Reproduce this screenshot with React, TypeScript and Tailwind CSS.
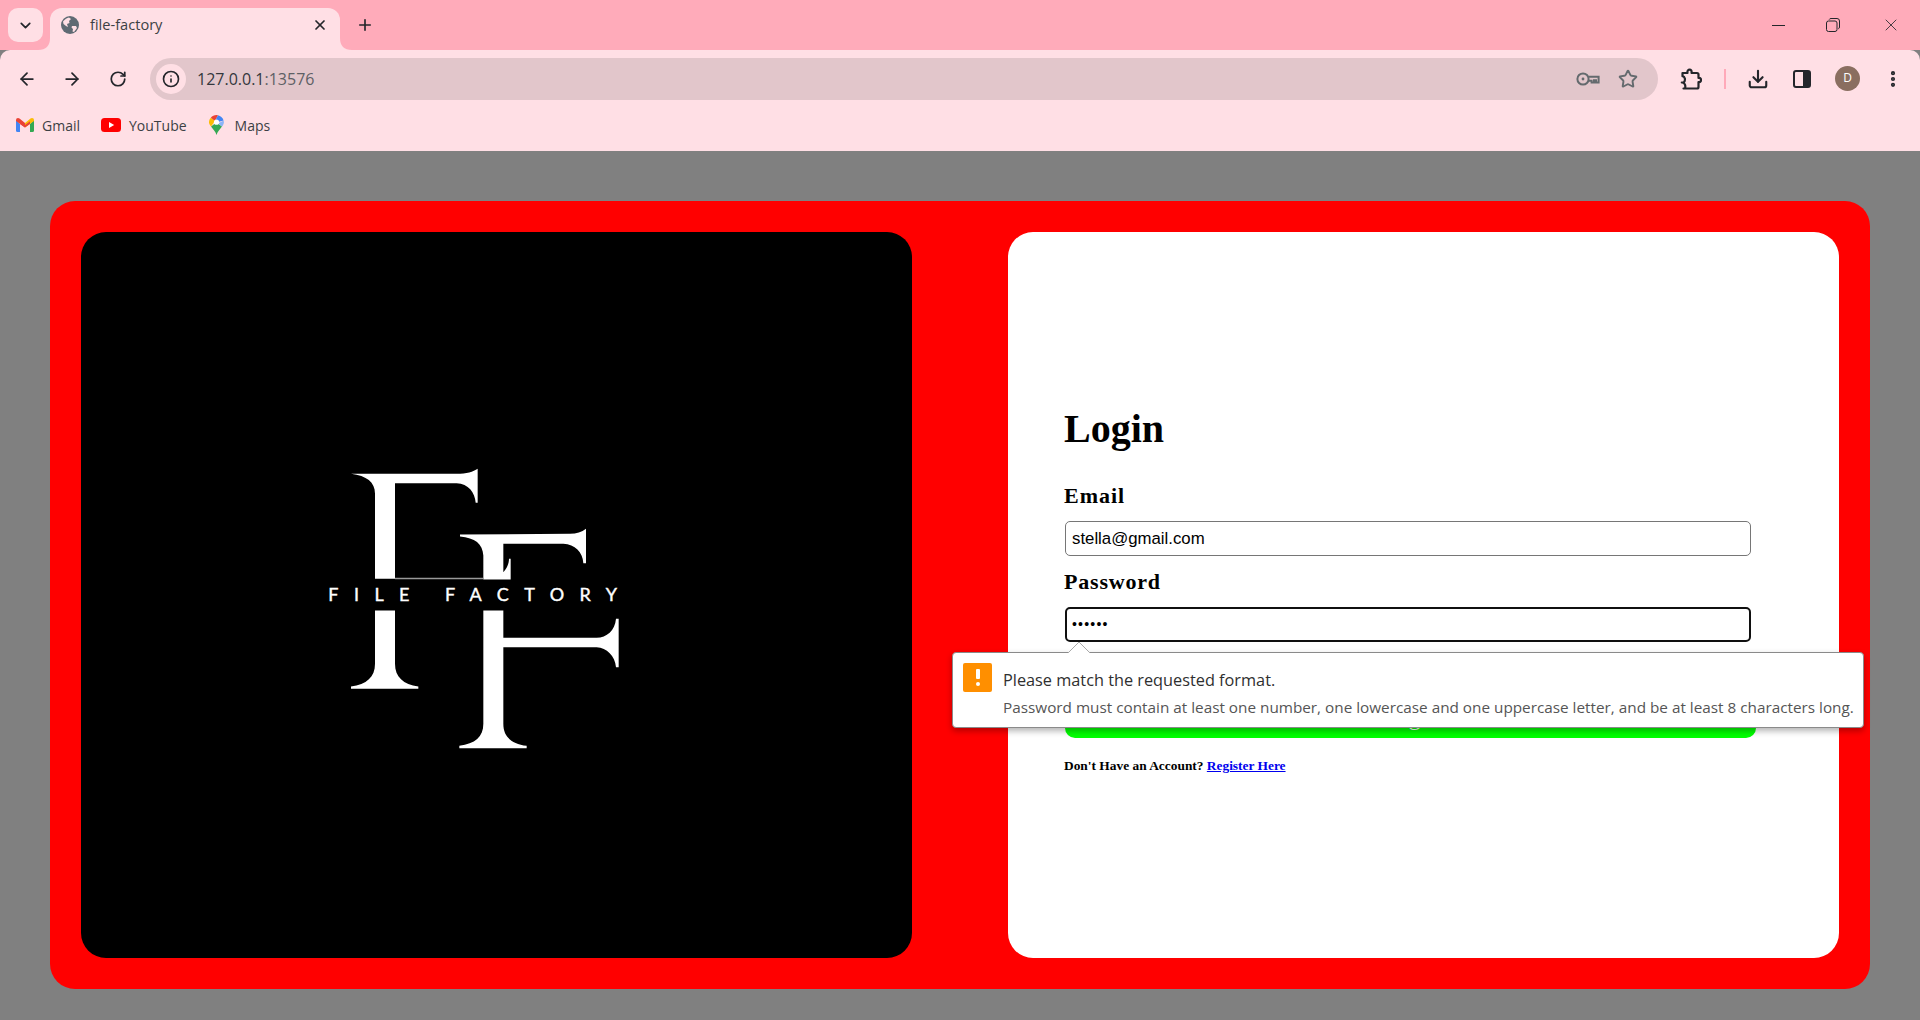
import React from "react";
import { ArrowLeft, ArrowRight, RotateCw, Info, Star, Download, X, Plus, ChevronDown, EllipsisVertical } from "lucide-react";

function Globe() {
  return (
    <svg width="18" height="18" viewBox="0 0 18 18">
      <circle cx="9" cy="9" r="9" fill="#5f6a73" />
      <path d="M2 5.5 C4 3 6 2 8 1.5 L10 3 L8 5 L8.5 7 L6 8 L7 11 L5 10 L2.5 8 Z" fill="#ffdfe5" />
      <path d="M11 10 L15 10 L16 12 L13 16 L11.5 15.5 L12 13 L10.5 11.5 Z" fill="#ffdfe5" />
    </svg>
  );
}

function Gmail() {
  return (
    <svg width="18" height="14" viewBox="0 0 18 14">
      <path d="M0 2 L0 12.5 Q0 14 1.5 14 L4 14 L4 6 Z" fill="#4285f4" />
      <path d="M14 6 L14 14 L16.5 14 Q18 14 18 12.5 L18 2 Z" fill="#34a853" />
      <path d="M0 2 Q0 0 2 0 Q2.8 0 3.5 .6 L9 5 L9 9.5 L0 3 Z" fill="#ea4335" />
      <path d="M18 2 Q18 0 16 0 Q15.2 0 14.5 .6 L9 5 L9 9.5 L18 3 Z" fill="#fbbc04" />
      <path d="M4 3.2 L9 7 L14 3.2 L14 6 L9 9.5 L4 6 Z" fill="#ea4335" />
    </svg>
  );
}

function YouTube() {
  return (
    <svg width="20" height="14" viewBox="0 0 20 14">
      <rect width="20" height="14" rx="3.5" fill="#ff0000" />
      <path d="M8 4 L13.2 7 L8 10 Z" fill="#fff" />
    </svg>
  );
}

function Maps() {
  return (
    <svg width="15" height="20" viewBox="0 0 15 20">
      <path d="M7.5 20 C6.5 16.5 4 14.5 2 11.5 L7.5 7.5 L13 11.5 C11 14.5 8.5 16.5 7.5 20 Z" fill="#34a853" />
      <path d="M2 11.5 C.6 9.8 0 8.8 0 7.3 C0 5.6 .6 4 1.8 2.8 L6 6 Z" fill="#fbbc04" />
      <path d="M1.8 2.8 C3.2 1 5.2 0 7.5 0 L9 .2 L6 6 Z" fill="#ea4335" />
      <path d="M9 .2 C11.6 .8 13.6 2.8 14.6 5.4 L9 7 L6 6 Z" fill="#4285f4" />
      <path d="M14.6 5.4 C15.2 7.8 14.8 9.4 13 11.5 L9 8.5 Z" fill="#8ab4f8" />
      <circle cx="7.5" cy="7.2" r="2.6" fill="#fff" />
    </svg>
  );
}

function KeyIcon() {
  return (
    <svg width="24" height="14" viewBox="0 0 24 14" fill="none" stroke="#646a6e" strokeWidth="2">
      <circle cx="7" cy="7" r="5.6" />
      <circle cx="7" cy="7" r="1.4" fill="#646a6e" stroke="none" />
      <path d="M12.6 4.8 L22.6 4.8 L22.6 10.5 L20 10.5 L20 8.2 L18 8.2 L18 10.5 L15.6 10.5 L15.6 8.8 L12.6 8.8" />
    </svg>
  );
}

function PuzzleIcon() {
  return (
    <svg width="22" height="22" viewBox="0 0 22 22" fill="none" stroke="#24262b" strokeWidth="2.2" strokeLinejoin="round">
      <path d="M2.5 5 L7.5 5 C7 2.5 8.5 1.6 9.6 1.6 C10.8 1.6 12 2.6 11.5 5 L17 5 Q18.5 5 18.5 6.5 L18.5 10 C20.5 9.5 21 11 21 12 C21 13 20.5 14.5 18.5 14 L18.5 19 Q18.5 20.5 17 20.5 L3.5 20.5 L5 20.5 C6 17 4.5 14.5 1.8 14.5 L3.8 14.5 C5.8 12 5 8.5 2.5 8.2 Z" />
    </svg>
  );
}

function SidePanelIcon() {
  return (
    <svg width="18" height="18" viewBox="0 0 18 18">
      <rect x="1" y="1" width="16" height="16" rx="2" fill="none" stroke="#24262b" strokeWidth="2" />
      <path d="M10 1 L15 1 Q17 1 17 3 L17 15 Q17 17 15 17 L10 17 Z" fill="#24262b" />
    </svg>
  );
}

function RestoreIcon() {
  return (
    <svg width="14" height="14" viewBox="0 0 14 14" fill="none" stroke="#24262b" strokeWidth="1">
      <rect x=".5" y="3" width="10.5" height="10.5" rx="2" />
      <path d="M3.2 1.6 Q3.6 .5 5 .5 L11 .5 Q13.5 .5 13.5 3 L13.5 9 Q13.5 10.4 12.3 10.8" />
    </svg>
  );
}

function Logo() {
  return (
    <svg width="500" height="500" viewBox="-189 -316.5 1500 1500" className="shrink-0">
      <g fill="#fff">
        <path d="M123 70 C170 76 195 95 195 130 L195 385 L255 385 L255 98 L440 98 C475 100 495 125 497 157 L503 157 L503 55 C490 64 470 70 440 70 Z" />
        <path d="M195 480 L255 480 L255 640 C255 680 280 702 325 708 L325 715 L123 715 L123 708 C170 702 195 680 195 640 Z" />
        <path d="M450 252 L780 250 C800 250 815 245 828 235 L828 338 L820 338 C818 305 795 282 760 280 L580 280 L580 365 C590 355 597 340 597 325 L602 325 L602 387 L520 387 L520 315 C518 280 495 262 450 258 Z" />
        <path d="M255 382 L520 382 L520 386 L255 386 Z" fill="#999" />
        <path d="M520 480 L580 480 L580 562 L860 562 C890 562 915 540 918 505 L926 505 L926 650 L918 650 C915 615 890 592 860 590 L580 590 L580 820 C580 860 605 880 650 886 L650 893 L448 893 L448 886 C495 880 520 860 520 820 Z" />
        <text x="55" y="451" fontSize="54" fontFamily="Lato, sans-serif" stroke="#fff" strokeWidth="1.2" textLength="866" lengthAdjust="spacing">FILE FACTORY</text>
      </g>
    </svg>
  );
}

export default function App() {
  return (
    <div className="relative flex h-screen w-full flex-col overflow-hidden bg-[#808080] font-['Open_Sans',sans-serif]">
      <div className="flex h-[50px] shrink-0 items-end bg-[#ffabba] pl-2">
        <div className="mb-2 flex h-[34px] w-[35px] items-center justify-center rounded-[10px] bg-[#ffdfe5]">
          <ChevronDown size={17} strokeWidth={2.4} color="#24262b" />
        </div>
        <div className="relative ml-[7px] flex h-[42px] w-[290px] items-center rounded-t-[12px] bg-[#ffdfe5] pb-[8px] pl-[11px] pr-[12px]">
          <svg className="absolute bottom-0 left-[-12px]" width="12" height="12" viewBox="0 0 12 12"><path d="M12 0 L12 12 L0 12 Q12 12 12 0 Z" fill="#ffdfe5" /></svg>
          <svg className="absolute bottom-0 right-[-12px]" width="12" height="12" viewBox="0 0 12 12"><path d="M0 0 L0 12 L12 12 Q0 12 0 0 Z" fill="#ffdfe5" /></svg>
          <Globe />
          <span className="ml-[11px] flex-1 text-[14.6px] text-[#3c3f44]">file-factory</span>
          <X size={16} strokeWidth={2.6} color="#24262b" />
        </div>
        <div className="mb-[12px] ml-[16px] flex h-[26px] items-center">
          <Plus size={18} strokeWidth={2.2} color="#24262b" />
        </div>
        <div className="mb-[15px] ml-auto flex items-center pr-[19px]">
          <div className="h-[1px] w-[13px] bg-[#24262b]" />
          <div className="ml-[41px]"><RestoreIcon /></div>
          <div className="ml-[41px]"><X size={20} strokeWidth={1} color="#24262b" /></div>
        </div>
      </div>

      <div className="flex h-[101px] shrink-0 flex-col rounded-t-[10px] bg-[#ffdfe5]">
        <div className="flex h-[58px] items-center pl-[17px]">
          <ArrowLeft size={20} strokeWidth={2.1} color="#24262b" />
          <ArrowRight size={20} strokeWidth={2.1} color="#24262b" className="ml-[25px]" />
          <RotateCw size={18} strokeWidth={2.3} color="#24262b" className="ml-[27px]" />
          <div className="ml-[23px] flex h-[42px] w-[1508px] items-center rounded-[21px] bg-[#e2c6cb] pl-[6px] pr-[20px]">
            <div className="flex h-[30px] w-[30px] items-center justify-center rounded-full bg-[#ffdfe5]">
              <Info size={18} strokeWidth={2.2} color="#24262b" />
            </div>
            <span className="ml-[11px] flex-1 text-[16px] text-[#33373d]">
              127.0.0.1<span className="text-[#5e6065]">:13576</span>
            </span>
            <KeyIcon />
            <Star size={20} strokeWidth={2.3} color="#646a6e" className="ml-[18px]" />
          </div>
          <div className="ml-[22px]"><PuzzleIcon /></div>
          <div className="ml-[22px] h-[20px] w-[2px] bg-[#ffa9b9]" />
          <Download size={22} strokeWidth={2.3} color="#24262b" className="ml-[21px]" />
          <div className="ml-[24px]"><SidePanelIcon /></div>
          <div className="mb-[2px] ml-[24px] flex h-[25px] w-[25px] items-center justify-center rounded-full bg-[#8a6e60] text-[12px] text-white">D</div>
          <EllipsisVertical size={20} strokeWidth={3} color="#24262b" className="ml-[23px]" />
        </div>
        <div className="flex h-[34px] items-center pl-[16px] text-[14px] text-[#3c3f44]">
          <Gmail />
          <span className="ml-[8px]">Gmail</span>
          <div className="ml-[21px]"><YouTube /></div>
          <span className="ml-[8px]">YouTube</span>
          <div className="ml-[22px]"><Maps /></div>
          <span className="ml-[11px]">Maps</span>
        </div>
      </div>

      <div className="flex-1 px-[50px] pb-[31px] pt-[50px]">
        <div className="grid h-full grid-cols-2 gap-[96px] rounded-[25px] bg-[#ff0000] p-[31px]">
          <div className="flex items-center justify-center overflow-hidden rounded-[25px] bg-black">
            <Logo />
          </div>
          <div className="flex flex-col justify-center rounded-[25px] bg-white pb-[9px] pl-[56px] font-['Liberation_Serif',serif] text-black">
            <h1 className="text-[40px] font-bold leading-[46px]">Login</h1>
            <label className="mt-[31px] text-[22px] font-bold leading-[26px] tracking-[1px]">Email</label>
            <div className="ml-[1px] mt-[12px] flex h-[35px] w-[686px] items-center rounded-[5px] border border-[#767676] px-[6px] font-['Liberation_Sans',sans-serif] text-[16.8px]">stella@gmail.com</div>
            <label className="mt-[13px] text-[22px] font-bold leading-[26px] tracking-[0.8px]">Password</label>
            <div className="ml-[1px] mt-[12px] flex h-[35px] w-[686px] items-center rounded-[5px] border-2 border-[#101010] px-[5px] font-['Liberation_Sans',sans-serif] text-[14px] tracking-[1.2px]">••••••</div>
            <div className="ml-[1px] mt-[33px] flex h-[63px] w-[691px] items-center justify-center rounded-[10px] bg-[#00ff00] pt-[20px] text-[24px] text-white">Login</div>
            <p className="mt-[19px] text-[13.4px] font-bold leading-[18px]">
              Don't Have an Account? <a className="text-[#0000ee] underline">Register Here</a>
            </p>
          </div>
        </div>
      </div>

      <div className="absolute left-[952px] top-[652px] flex h-[76px] w-[912px] items-start rounded-[4px] border border-[#8a8a8a] bg-white pl-[10px] pt-[10px] shadow-[0_3px_6px_rgba(0,0,0,0.3)]">
        <svg className="absolute left-[115px] top-[-11px]" width="22" height="11" viewBox="0 0 22 11">
          <path d="M0 11 L11 0 L22 11" fill="#fff" stroke="#aaa" strokeWidth="1" />
        </svg>
        <div className="relative flex h-[29px] w-[29px] shrink-0 items-center justify-center rounded-[2px] bg-[#ff8f00]">
          <div className="flex flex-col items-center gap-[3px]">
            <div className="h-[10px] w-[4px] rounded-[1px] bg-white" />
            <div className="h-[4px] w-[4px] rounded-full bg-white" />
          </div>
        </div>
        <div className="ml-[11px]">
          <div className="mt-[6px] text-[16.3px] leading-[22px] text-[#2f2f2f]">Please match the requested format.</div>
          <div className="mt-[6px] whitespace-nowrap text-[15.3px] leading-[20px] text-[#555]">Password must contain at least one number, one lowercase and one uppercase letter, and be at least 8 characters long.</div>
        </div>
      </div>
    </div>
  );
}
